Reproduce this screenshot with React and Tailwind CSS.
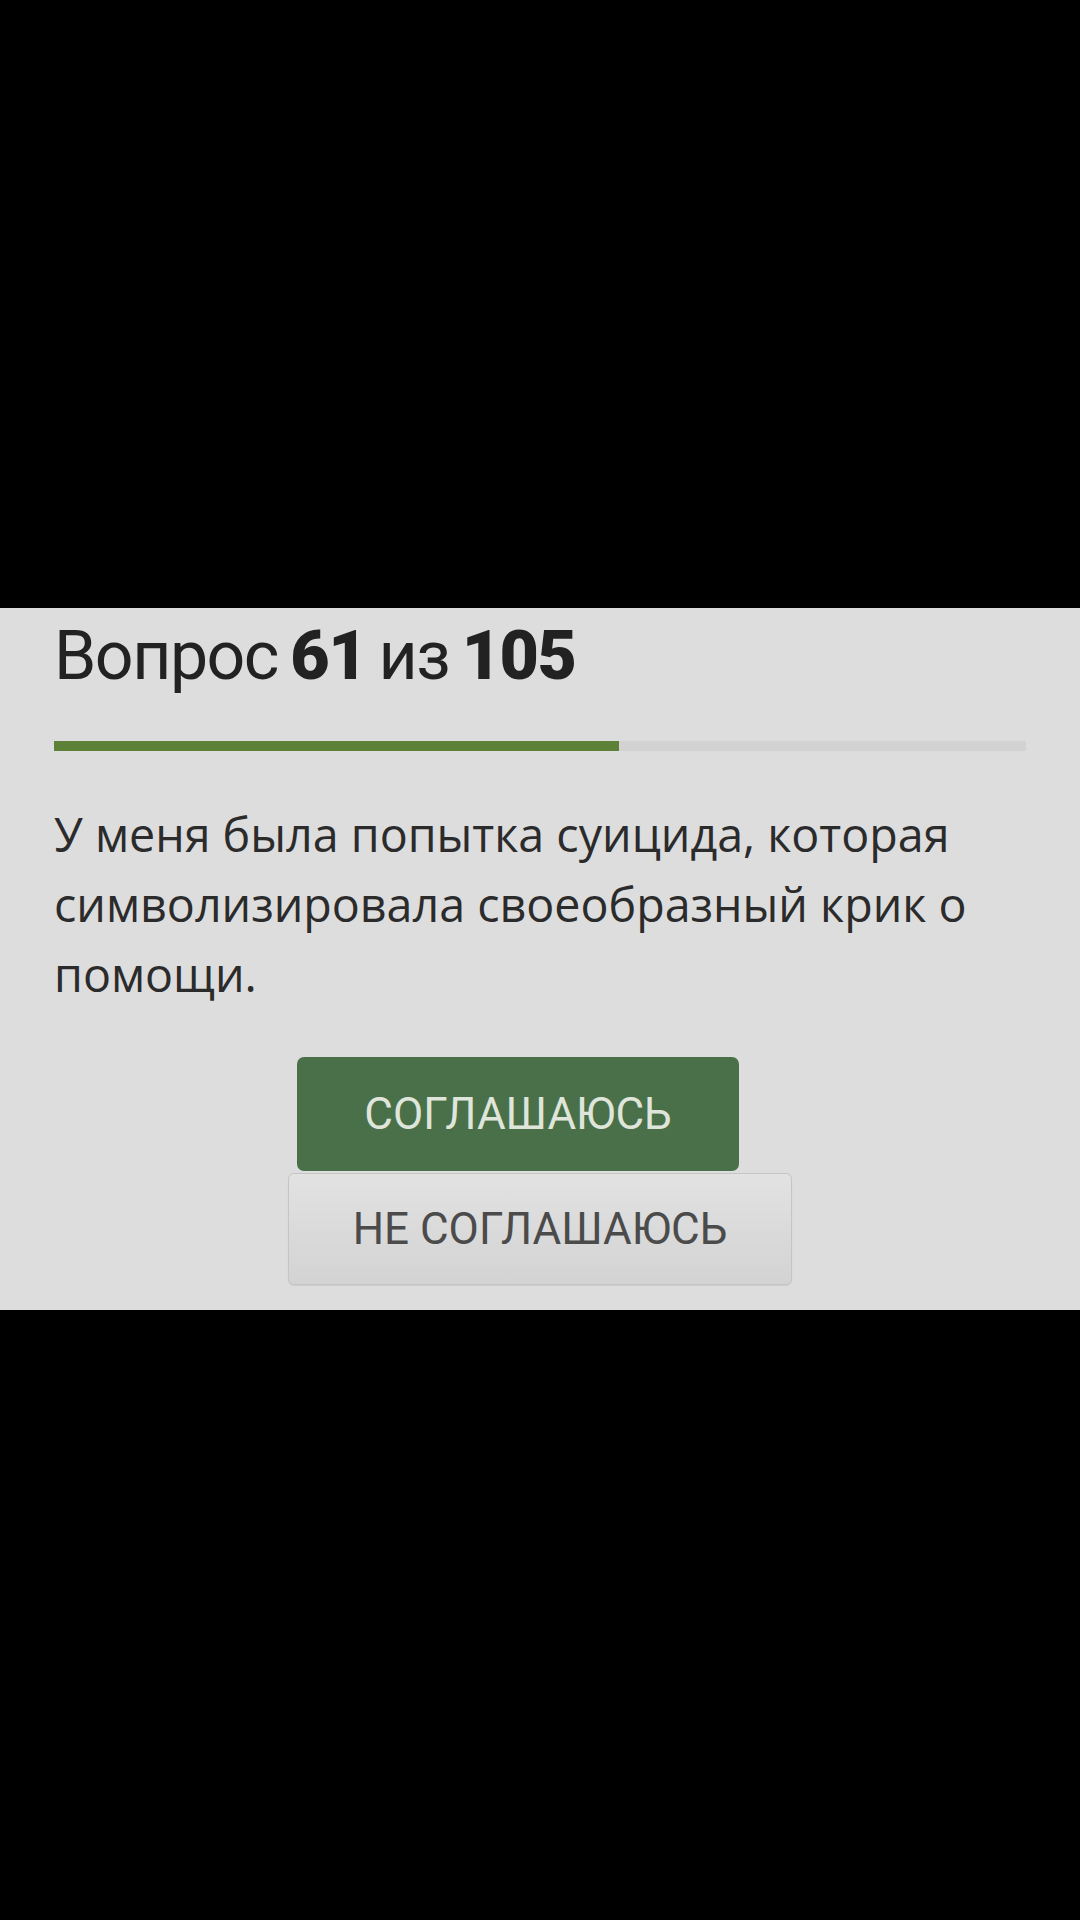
import React from 'react';

const quiz = {
    current: 61,
    total: 105,
    text: 'У меня была попытка суицида, которая символизировала своеобразный крик о помощи.',
};

const App = () => {
    const progress = (quiz.current / quiz.total) * 100;

    return (
        <div className="min-h-[1920px] w-[1080px] bg-black pt-[608px]">
            <div className="h-[702px] bg-[#dddddd] px-[54px] pt-[14px]">
                {/* Header */}
                <h1 className="text-[68px] leading-[68px] text-[#222222] tracking-[-1.5px] [word-spacing:-3px]"
                    style={{ fontFamily: 'Roboto, Inter, sans-serif' }}>
                    Вопрос <span className="font-black">{quiz.current}</span> из <span className="font-black">{quiz.total}</span>
                </h1>

                {/* Progress */}
                <div className="mt-[51px] h-[10px] w-full bg-[#d2d2d2]">
                    <div className="h-full bg-[#5d8137]" style={{ width: `${progress}%` }}></div>
                </div>

                {/* Question */}
                <p className="mt-[48px] text-[46.6px] leading-[70px] text-[#2b2b2b]"
                    style={{ fontFamily: '"Open Sans", sans-serif' }}>
                    {quiz.text}
                </p>

                {/* Answers */}
                <div className="mt-[48px] flex flex-col items-center gap-[2px]"
                    style={{ fontFamily: 'Roboto, "Liberation Sans", sans-serif' }}>
                    <button className="mr-[44px] h-[114px] w-[442px] rounded-[7px] bg-[#4a704a] text-[44px] text-[#dfe5da]">
                        СОГЛАШАЮСЬ
                    </button>
                    <button className="h-[112px] w-[504px] rounded-[6px] border border-[#c5c5c5] bg-gradient-to-b from-[#e2e2e2] to-[#d3d3d3] text-[44px] text-[#4b4b4b] shadow-[0_1px_1px_rgba(0,0,0,0.08)]">
                        НЕ СОГЛАШАЮСЬ
                    </button>
                </div>
            </div>
        </div>
    );
};

export default App;
